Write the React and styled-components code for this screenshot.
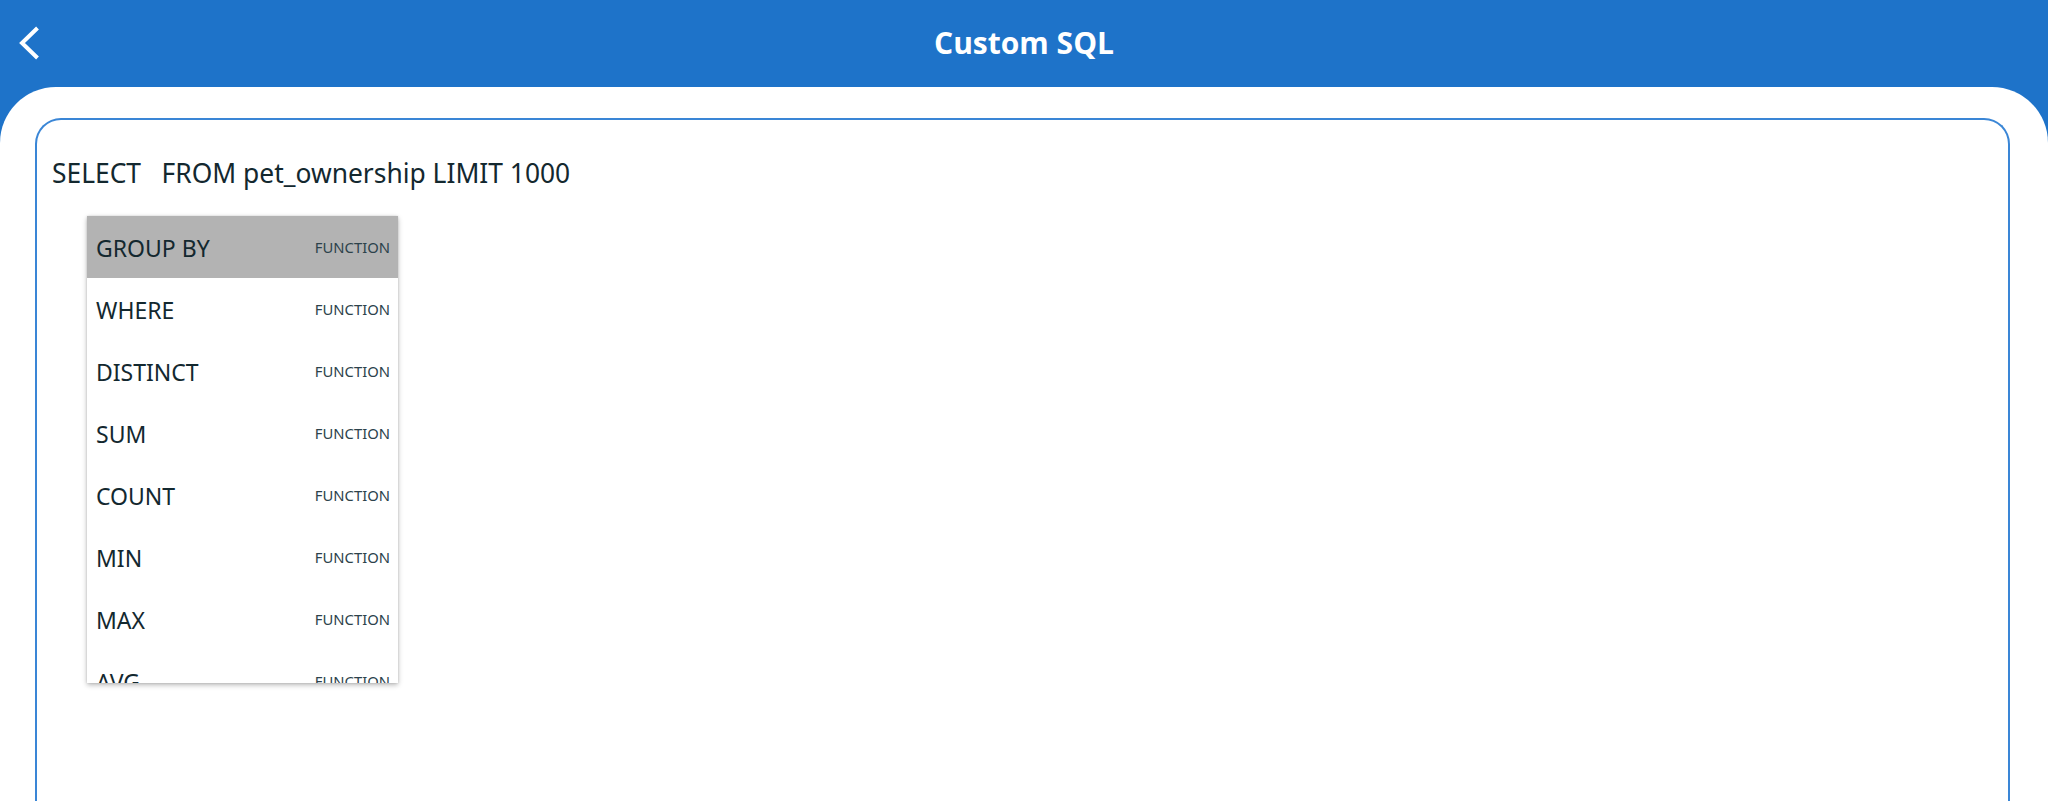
import React from "react";
import styled, { createGlobalStyle } from "styled-components";

const Global = createGlobalStyle`
  html, body { margin: 0; padding: 0; height: 100%; overflow: hidden; }
  body { font-family: "Noto Sans", "Open Sans", sans-serif; background: #1e73c9; }
  #root { height: 100%; }
`;

const Page = styled.div`
  height: 801px;
  display: flex;
  flex-direction: column;
  background: #1e73c9;
`;

const Header = styled.header`
  height: 87px;
  flex: none;
  display: grid;
  grid-template-columns: 1fr auto 1fr;
  align-items: center;
`;

const BackButton = styled.button`
  justify-self: start;
  background: none;
  border: 0;
  padding: 0 0 0 14px;
  height: 87px;
  display: flex;
  align-items: center;
  cursor: pointer;
`;

const Title = styled.h1`
  margin: 0;
  color: #fff;
  font-family: "Open Sans", "Noto Sans", sans-serif;
  font-weight: 700;
  font-size: 30px;
  padding-bottom: 3px;
`;

const Sheet = styled.main`
  flex: 1;
  background: #fff;
  border-radius: 56px 56px 0 0;
  padding: 31px 38px 0 35px;
  display: flex;
  flex-direction: column;
  min-height: 0;
`;

const Editor = styled.section`
  position: relative;
  flex: 1;
  border: 2px solid #3a86d6;
  border-bottom: 0;
  border-radius: 26px 26px 0 0;
  padding: 35px 15px 0 15px;
`;

const Query = styled.div`
  font-size: 26.4px;
  line-height: 36px;
  color: #13282f;
  white-space: pre;
`;

const Suggestions = styled.ul`
  position: absolute;
  left: 50px;
  top: 96px;
  width: 311px;
  height: 467px;
  margin: 0;
  padding: 0;
  list-style: none;
  background: #fff;
  overflow: hidden;
  box-shadow: 0 2px 5px rgba(0, 0, 0, 0.28), 0 0 2px rgba(0, 0, 0, 0.12);
`;

const Item = styled.li`
  height: 62px;
  display: flex;
  align-items: center;
  justify-content: space-between;
  padding: 0 8px 0 9px;
  background: ${(p) => (p.$active ? "#b3b3b3" : "#fff")};
`;

const Label = styled.span`
  font-size: 23px;
  color: #13282f;
  padding-top: 2px;
`;

const Kind = styled.span`
  font-size: 14.8px;
  color: #2c424b;
`;

const items = ["GROUP BY", "WHERE", "DISTINCT", "SUM", "COUNT", "MIN", "MAX", "AVG"];

export default function App() {
  return (
    <>
      <Global />
      <Page>
        <Header>
          <BackButton aria-label="Back">
            <svg width="30" height="36" viewBox="0 0 30 36">
              <polyline points="23.5,2 8,17 23.5,32" fill="none" stroke="#fff" strokeWidth="4" strokeLinecap="butt" strokeLinejoin="miter" />
            </svg>
          </BackButton>
          <Title>Custom SQL</Title>
          <div />
        </Header>
        <Sheet>
          <Editor>
            <Query>{"SELECT   FROM pet_ownership LIMIT 1000"}</Query>
            <Suggestions>
              {items.map((it, i) => (
                <Item key={it} $active={i === 0}>
                  <Label>{it}</Label>
                  <Kind>FUNCTION</Kind>
                </Item>
              ))}
            </Suggestions>
          </Editor>
        </Sheet>
      </Page>
    </>
  );
}
